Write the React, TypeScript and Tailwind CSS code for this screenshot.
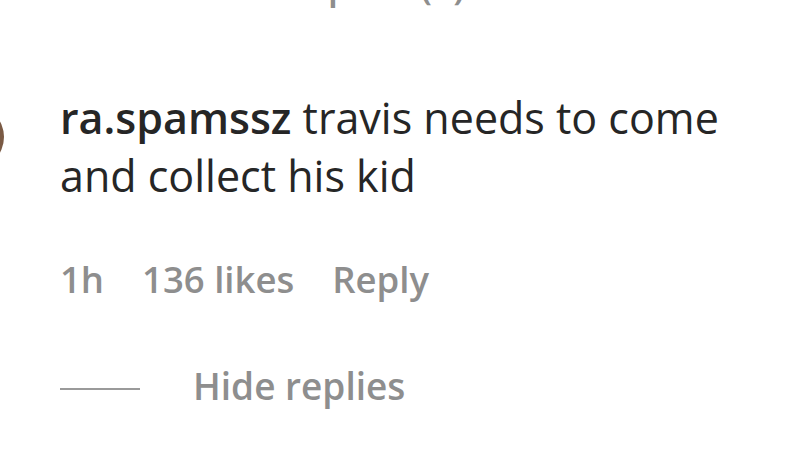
import React from "react";

export default function App() {
  return (
    <div className="w-[800px] h-[450px] bg-white overflow-hidden font-['Open_Sans',sans-serif]">
      {/* previous line, clipped at the top */}
      <div className="h-[20px] relative">
        <div className="absolute left-[196px] -top-[35px] text-[37px] leading-[40px] text-[#8e8e8e] font-semibold whitespace-nowrap">
          View replies (1)
        </div>
      </div>

      {/* comment */}
      <div className="flex mt-[69px]">
        <div className="w-[64px] h-[64px] -ml-[60px] mt-[16px] rounded-full bg-[#7a5a44] shrink-0" />
        <div className="ml-[56px] flex flex-col">
          <p className="w-[740px] text-[43px] leading-[58px] text-[#262626]">
            <span className="font-semibold">ra.spamssz</span> travis needs to come
            <br />
            and collect his kid
          </p>
          <div className="flex items-center gap-[38px] mt-[54px] text-[36.5px] leading-[40px] text-[#8e8e8e] font-semibold">
            <span>1h</span>
            <span>136 likes</span>
            <span>Reply</span>
          </div>
          <div className="flex items-center mt-[67px]">
            <div className="w-[80px] h-[2px] mt-[6px] bg-[#9a9a9a]" />
            <span className="ml-[53px] text-[37px] leading-[40px] text-[#8e8e8e] font-semibold">Hide replies</span>
          </div>
        </div>
      </div>
    </div>
  );
}
